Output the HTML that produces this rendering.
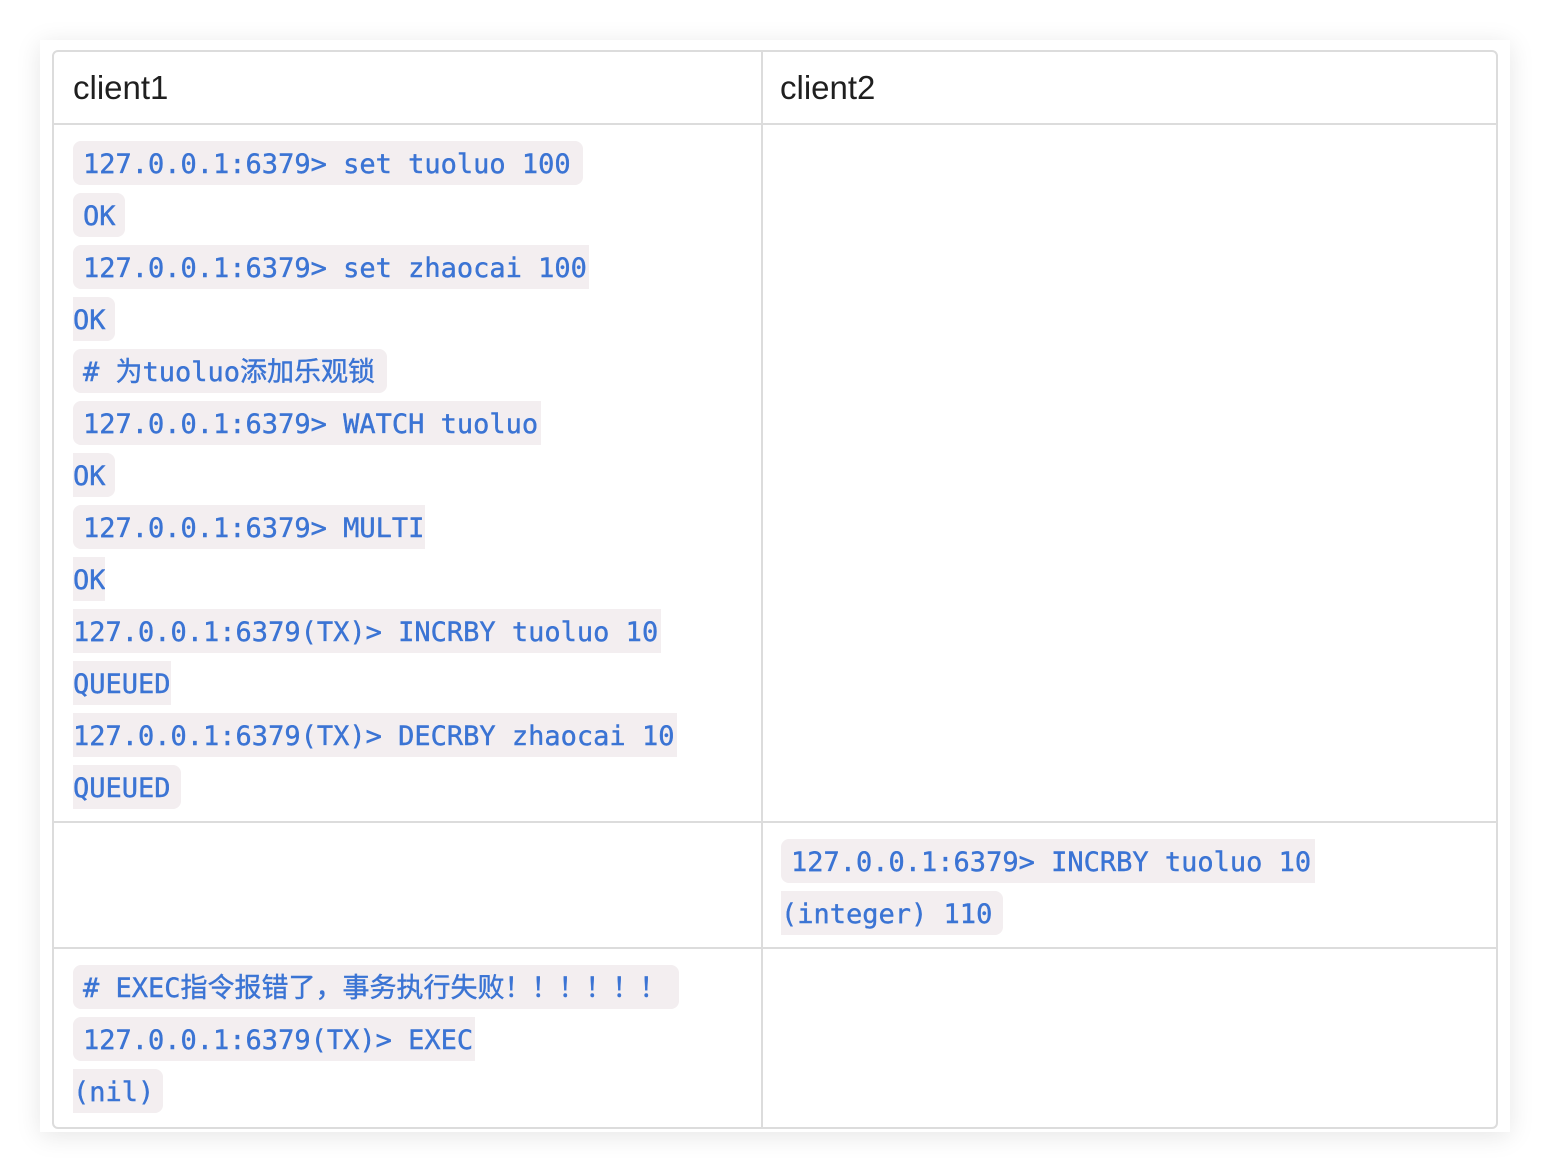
<!DOCTYPE html>
<html><head><meta charset="utf-8"><style>
body{margin:0;width:1550px;height:1172px;background:#fff;position:relative;overflow:hidden;font-family:"Liberation Sans","Noto Sans CJK SC",sans-serif}
.card{position:absolute;left:40px;top:40px;width:1470px;height:1092px;background:#fff;box-shadow:0 4px 24px rgba(0,0,0,0.10)}
.tb{position:absolute;left:52px;top:50px;width:1442px;height:1075px;border:2px solid #dcdcdc;border-radius:6px}
.h{position:absolute;height:2px;background:#dcdcdc;left:52px;width:1444px}
.v{position:absolute;width:2px;background:#dcdcdc;left:761px;top:50px;height:1077px}
.th{position:absolute;top:70px;font-size:33px;color:#1f1f1f;line-height:36px}
.c{position:absolute;height:44px;line-height:48px;background:#f3eef0;color:#3b74d4;font-family:"DejaVu Sans Mono","Noto Sans CJK SC",monospace;font-size:27px;white-space:pre;box-sizing:border-box;border-radius:8px;overflow:hidden;-webkit-text-stroke:0.4px #3b74d4}
</style></head><body>
<div class="card"></div>
<div class="tb"></div>
<div class="h" style="top:123px"></div>
<div class="h" style="top:821px"></div>
<div class="h" style="top:947px"></div>
<div class="v"></div>
<div class="th" style="left:73px">client1</div>
<div class="th" style="left:780px">client2</div>

<div class="c" style="left:73px;top:141px;width:510px;padding-left:10px">127.0.0.1:6379&gt; set tuoluo 100</div>
<div class="c" style="left:73px;top:193px;width:52px;padding-left:10px">OK</div>
<div class="c" style="left:73px;top:245px;width:516px;padding-left:10px;border-radius:8px 0 0 8px">127.0.0.1:6379&gt; set zhaocai 100</div>
<div class="c" style="left:73px;top:297px;width:42px;border-radius:0 8px 8px 0">OK</div>
<div class="c" style="left:73px;top:349px;width:314px;padding-left:10px"># 为tuoluo添加乐观锁</div>
<div class="c" style="left:73px;top:401px;width:468px;padding-left:10px;border-radius:8px 0 0 8px">127.0.0.1:6379&gt; WATCH tuoluo</div>
<div class="c" style="left:73px;top:453px;width:42px;border-radius:0 8px 8px 0">OK</div>
<div class="c" style="left:73px;top:505px;width:352px;padding-left:10px;border-radius:8px 0 0 8px">127.0.0.1:6379&gt; MULTI</div>
<div class="c" style="left:73px;top:557px;width:32px;border-radius:0">OK</div>
<div class="c" style="left:73px;top:609px;width:588px;border-radius:0">127.0.0.1:6379(TX)&gt; INCRBY tuoluo 10</div>
<div class="c" style="left:73px;top:661px;width:98px;border-radius:0">QUEUED</div>
<div class="c" style="left:73px;top:713px;width:604px;border-radius:0">127.0.0.1:6379(TX)&gt; DECRBY zhaocai 10</div>
<div class="c" style="left:73px;top:765px;width:108px;border-radius:0 8px 8px 0">QUEUED</div>

<div class="c" style="left:781px;top:839px;width:534px;padding-left:10px;border-radius:8px 0 0 8px">127.0.0.1:6379&gt; INCRBY tuoluo 10</div>
<div class="c" style="left:781px;top:891px;width:222px;border-radius:0 8px 8px 0">(integer) 110</div>

<div class="c" style="left:73px;top:965px;width:606px;padding-left:10px"># EXEC指令报错了，事务执行失败！！！！！！</div>
<div class="c" style="left:73px;top:1017px;width:402px;padding-left:10px;border-radius:8px 0 0 8px">127.0.0.1:6379(TX)&gt; EXEC</div>
<div class="c" style="left:73px;top:1069px;width:90px;border-radius:0 8px 8px 0">(nil)</div>
</body></html>
